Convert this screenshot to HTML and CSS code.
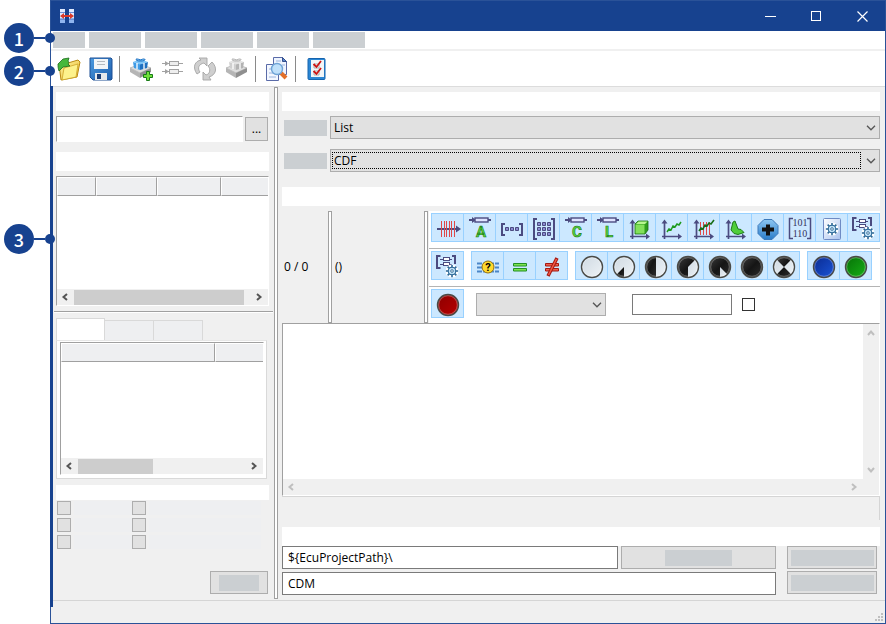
FILE: index.html
```html
<!DOCTYPE html>
<html lang="en">
<head>
<meta charset="utf-8">
<title>Data conversion</title>
<link rel="stylesheet" href="styles.css">
</head>
<body>
<svg class="defs" aria-hidden="true">
  <defs>
    <linearGradient id="gLight" x1="0" y1="0" x2="1" y2="1"><stop offset="0" stop-color="#cfd9e2"/><stop offset="1" stop-color="#eef3f7"/></linearGradient>
    <linearGradient id="gDark" x1="0" y1="0" x2="1" y2="1"><stop offset="0" stop-color="#3c3c3c"/><stop offset=".5" stop-color="#151515"/><stop offset="1" stop-color="#2c2c2c"/></linearGradient>
    <linearGradient id="gBlue" x1="0" y1="0" x2="1" y2="1"><stop offset="0" stop-color="#0a2a90"/><stop offset="1" stop-color="#1a55d8"/></linearGradient>
    <linearGradient id="gGreen" x1="0" y1="0" x2="1" y2="1"><stop offset="0" stop-color="#067006"/><stop offset="1" stop-color="#17b017"/></linearGradient>
    <linearGradient id="gRed" x1="0" y1="0" x2="1" y2="1"><stop offset="0" stop-color="#8c0000"/><stop offset="1" stop-color="#b80000"/></linearGradient>
    <linearGradient id="gPage" x1="0" y1="0" x2="1" y2="1"><stop offset="0" stop-color="#ffffff"/><stop offset="1" stop-color="#a9c2ee"/></linearGradient>
    <linearGradient id="gFolder" x1="0" y1="0" x2="1" y2="1"><stop offset="0" stop-color="#fff7a8"/><stop offset="1" stop-color="#eab92c"/></linearGradient>
    <linearGradient id="gOct" x1="0" y1="0" x2="0" y2="1"><stop offset="0" stop-color="#8cc6f2"/><stop offset="1" stop-color="#2b7cc8"/></linearGradient>
    <linearGradient id="gSave" x1="0" y1="0" x2="1" y2="1"><stop offset="0" stop-color="#4d9be0"/><stop offset="1" stop-color="#1d5fae"/></linearGradient>
    <symbol id="param" viewBox="0 0 31 27">
      <path d="M5 6h5M24 6h3" stroke="#4b4b80" stroke-width="2"/><path d="M8 3l4 3-4 3z" fill="#4b4b80"/>
      <rect x="11" y="4" width="13" height="4" fill="#dfe3ff" stroke="#4b4b80" stroke-width="1.4"/>
    </symbol>
    <symbol id="axes" viewBox="0 0 31 27">
      <path d="M8.500 8v17M6 22.500h17" stroke="#4b4b80" stroke-width="1.700" fill="none"/>
      <path d="M5.500 9.500l3-4 3 4zM22 19.500l4 3-4 3z" fill="#4b4b80"/>
    </symbol>
    <symbol id="gear" viewBox="0 0 16 16">
      <circle cx="8" cy="8" r="7.500" fill="#fff"/>
      <path d="M8 1v14M1 8h14M3 3l10 10M13 3L3 13" stroke="#2b6796" stroke-width="1.800"/>
      <circle cx="8" cy="8" r="4.300" fill="#bfe0f5" stroke="#2b6796" stroke-width="1.200"/>
      <circle cx="8" cy="8" r="1.500" fill="#fff" stroke="#2b6796"/>
    </symbol>
    <symbol id="listgear" viewBox="0 0 31 27">
      <path d="M8.500 4H5v12h3.500M20 4h3v8" fill="none" stroke="#4b4b80" stroke-width="2"/>
      <path d="M8 7.500h12M8 12.500h12" stroke="#4b4b80" stroke-width="1"/>
      <rect x="11.500" y="5.500" width="6" height="3" fill="#fff" stroke="#4b4b80"/><rect x="11.500" y="10.500" width="6" height="3" fill="#fff" stroke="#4b4b80"/>
      <use href="#gear" x="13" y="12" width="14" height="14"/>
    </symbol>
    <symbol id="ring" viewBox="0 0 31 27">
      <circle cx="16" cy="15" r="10.500" fill="none" stroke="#4a4a46" stroke-width="1.400"/>
      <circle cx="16" cy="15" r="9.300" fill="none" stroke="#fff" stroke-opacity=".3"/>
    </symbol>
    <symbol id="chev" viewBox="0 0 10 6"><path d="M1 .8l4 4 4-4" fill="none" stroke="#555" stroke-width="1.300"/></symbol>
    <symbol id="arrow" viewBox="0 0 8 8"><path d="M6 1L2.500 4 6 7" fill="none" stroke="currentColor" stroke-width="2"/></symbol>
    <symbol id="crate" viewBox="0 0 24 24">
      <path d="M1 13l10-4 11 4-11 5z" fill="#dedede" stroke="#aaa" stroke-width=".7"/>
      <path d="M1 13v4l10 6v-5z" fill="#b5b5b5"/><path d="M22 13v4l-11 6v-5z" fill="#8f8f8f"/>
      <path d="M4 7l7 2v6l-6-2z" fill="var(--box-a)"/><path d="M19 7l-8 2v6l7-2z" fill="var(--box-b)"/>
      <path d="M4 7l7-3 8 3-8 2.500z" fill="var(--box-c)"/>
      <path d="M8 8v6M15 8v6" stroke="#fff" stroke-width="1.300"/>
      <path d="M11.500 6C6 6.500 5 2 11.500 5c6-3 6 1.500 0 1z" fill="var(--box-c)" stroke="var(--box-b)" stroke-width="1"/>
    </symbol>
  </defs>
</svg>

<div class="app">
  <header class="titlebar">
    <svg class="logo" width="18" height="16" viewBox="0 0 18 16"><rect x="2" y="1" width="5" height="14" fill="#dfe9ff"/><rect x="11" y="1" width="5" height="14" fill="#dfe9ff"/><path d="M2 10h5v5H2zM11 10h5v5h-5z" fill="#8fb4ee"/><path d="M2 4.500h5M11 4.500h5M2 11.500h5M11 11.500h5" stroke="#6a8fd8"/><path d="M4 8h10" stroke="#d8392b" stroke-width="2"/><path d="M2 8l4-3v6zM16 8l-4-3v6z" fill="#d8392b"/></svg>
    <div class="winbtns">
      <button aria-label="Minimize"><svg width="11" height="11" viewBox="0 0 11 11"><path d="M0 5.500h11" stroke="#fff"/></svg></button>
      <button aria-label="Maximize"><svg width="11" height="11" viewBox="0 0 11 11"><rect x=".5" y=".5" width="9" height="9" fill="none" stroke="#fff"/></svg></button>
      <button aria-label="Close"><svg width="11" height="11" viewBox="0 0 11 11"><path d="M.5 .5l10 10M10.500 .5l-10 10" stroke="#fff" stroke-width="1.200"/></svg></button>
    </div>
  </header>
  <nav class="menu"><span class="short"></span><span></span><span></span><span></span><span></span><span></span></nav>
  <div class="toolbar">
    <button aria-label="Open"><svg width="24" height="24" viewBox="0 0 24 24"><path d="M2 7l7-3 2 2 10-3 2 2-3 15-16 3z" fill="url(#gFolder)" stroke="#b98a12"/><path d="M7 11l14-4-2 13-14 3z" fill="#fdf28c" stroke="#cda328" stroke-width=".8"/><path d="M1 7l5-5 6-1-1 3c1 1 1 2 0 3l2 2-7 1-4 4c-1-3-1-5-1-7z" fill="#46b83c" stroke="#1b6b1b" stroke-width=".8"/></svg></button>
    <button aria-label="Save"><svg width="24" height="24" viewBox="0 0 24 24"><path d="M1 1h21l1 1v20l-1 1H4l-3-3z" fill="url(#gSave)" stroke="#1c4f94"/><path d="M5 2h14v10H5z" fill="#f3f5f7"/><path d="M8 4.500h8M8 7.500h8" stroke="#b5babf"/><path d="M6 16h12v7H6z" fill="#e6e9ec"/><path d="M8 17h4v5H8z" fill="#1b3f78"/></svg></button>
    <i class="sep"></i>
    <button aria-label="Add package" class="blue"><svg width="24" height="24" viewBox="0 0 24 24"><use href="#crate" y="-2" width="24" height="24"/><path d="M17.500 14.500h3v3h3v3h-3v3h-3v-3h-3v-3h3z" fill="#6fe03a" stroke="#187a18"/></svg></button>
    <button aria-label="Parameters"><svg width="24" height="24" viewBox="0 0 24 24"><path d="M1 6.500h21M1 14.500h21" stroke="#a2a2a2"/><path d="M4 4l4 2.500L4 9zM4 12l4 2.500L4 17z" fill="#a2a2a2"/><rect x="8.500" y="4.500" width="9" height="4" fill="#eee" stroke="#a2a2a2"/><rect x="8.500" y="12.500" width="9" height="4" fill="#eee" stroke="#a2a2a2"/></svg></button>
    <button aria-label="Refresh"><svg width="24" height="24" viewBox="0 0 24 24"><path d="M4 17C-1 10 2 4 8 3L6 1l8 0v8l-3-3C6 7 4 11 7 15zM19 5c6 6 4 13-3 15l2 3h-8v-8l3 3c4-1 5-6 2-9z" fill="#cfcfcf" stroke="#a5a5a5" stroke-width=".9"/></svg></button>
    <button aria-label="Package"><svg width="24" height="24" viewBox="0 0 24 24"><use href="#crate" y="-2" width="24" height="24"/></svg></button>
    <i class="sep"></i>
    <button aria-label="Find in documents"><svg width="24" height="26" viewBox="0 0 24 26"><path d="M8.500 1.500h9l4 4v13h-13z" fill="#eef4ff" stroke="#5a6ba8"/><path d="M17.500 1.500v4h4z" fill="#5b86cc" stroke="#34508e"/><path d="M1.500 8.500h12v16h-12z" fill="#f3f7ff" stroke="#5a6ba8"/><path d="M4 13h6M4 17h6M4 21h7M11 5h5M17 9h3" stroke="#9ab4dd"/><path d="M16 17l5 5" stroke="#e2702a" stroke-width="4"/><circle cx="12" cy="13" r="5.500" fill="#bfe0fa" stroke="#6fa4d6" stroke-width="1.400"/></svg></button>
    <i class="sep"></i>
    <button aria-label="Checks"><svg width="20" height="24" viewBox="0 0 20 24"><rect x="1" y="1.500" width="17" height="21" rx="1" fill="#2a86d4" stroke="#1664ae"/><path d="M4 3h13v17H4z" fill="#f2f5f7"/><path d="M7 7h5v4H7zM7 14h5v4H7z" fill="#fff" stroke="#999" stroke-width=".8"/><path d="M6.500 7l3 3 4.500-6M6.500 14l3 3 4.500-6" fill="none" stroke="#cc1414" stroke-width="1.800"/></svg></button>
  </div>

  <main class="main">
    <aside class="side">
      <div class="band"></div>
      <div class="path"><input type="text" aria-label="Path"><button class="btn">...</button></div>
      <div class="band second"></div>
      <div class="frame">
        <table><tr><th class="w40"></th><th class="w61"></th><th class="w64"></th><th></th></tr></table>
        <div class="space"></div>
        <div class="hscroll"><svg width="8" height="10"><use href="#arrow"/></svg><i class="thumb long"></i><svg class="flip" width="8" height="10"><use href="#arrow"/></svg></div>
      </div>
      <hr>
      <div class="tabs"><button class="on" aria-label="Tab 1"></button><button aria-label="Tab 2"></button><button aria-label="Tab 3"></button></div>
      <div class="tabpanel">
        <div class="frame">
          <table><tr><th class="w155"></th><th></th></tr></table>
          <div class="space"></div>
          <div class="hscroll"><svg width="8" height="10"><use href="#arrow"/></svg><i class="thumb"></i><svg class="flip" width="8" height="10"><use href="#arrow"/></svg></div>
        </div>
      </div>
      <div class="band low"></div>
      <div class="checks">
        <label><input type="checkbox" aria-label="Option 1"><span></span></label><label><input type="checkbox" aria-label="Option 2"><span></span></label>
        <label><input type="checkbox" aria-label="Option 3"><span></span></label><label><input type="checkbox" aria-label="Option 4"><span></span></label>
        <label><input type="checkbox" aria-label="Option 5"><span></span></label><label><input type="checkbox" aria-label="Option 6"><span></span></label>
      </div>
      <button class="btn apply" aria-label="Apply"><i></i></button>
    </aside>
    <div class="split"></div>
    <section class="content">
      <div class="band"></div>
      <div class="field"><span class="tag"></span><div class="combo"><select aria-label="View"><option>List</option></select><svg width="10" height="6"><use href="#chev"/></svg></div></div>
      <div class="field"><span class="tag"></span><div class="combo focus"><select aria-label="Format"><option>CDF</option></select><i></i><svg width="10" height="6"><use href="#chev"/></svg></div></div>
      <div class="band third"></div>
      <div class="tools">
        <div class="count">0 / 0</div><div class="split"></div>
        <div class="sel">()</div><div class="split"></div>
        <div class="rows">
          <div class="row"><div class="group">
            <button aria-label="Signals"><svg viewBox="0 0 31 27"><path d="M5 15h20" stroke="#4b4b80" stroke-width="2"/><path d="M24 11.500l5 3.500-5 3.500z" fill="#4b4b80"/><path d="M9.500 7v16M12.500 7v16M14.500 7v16M17.500 7v16M19.500 7v16M22.500 7v16" stroke="#e04848" stroke-width="1"/></svg></button>
            <button aria-label="Axis"><svg viewBox="0 0 31 27"><use href="#param"/><text class="glyph" x="17" y="23">A</text></svg></button>
            <button aria-label="Array"><svg viewBox="0 0 31 27"><path d="M9 10H6v11h3M23 10h3v11h-3" fill="none" stroke="#4b4b80" stroke-width="2"/><path d="M9.500 13.500h3v3h-3zM14.500 13.500h3v3h-3zM19.500 13.500h3v3h-3z" fill="#8a8ad0" stroke="#4b4b80"/></svg></button>
            <button aria-label="Matrix"><svg viewBox="0 0 31 27"><path d="M9 5H6v20h3M23 5h3v20h-3" fill="none" stroke="#4b4b80" stroke-width="2"/><path d="M9.500 8.500h3v3h-3zM14.500 8.500h3v3h-3zM19.500 8.500h3v3h-3zM9.500 13.500h3v3h-3zM14.500 13.500h3v3h-3zM19.500 13.500h3v3h-3zM9.500 18.500h3v3h-3zM14.500 18.500h3v3h-3zM19.500 18.500h3v3h-3z" fill="#8a8ad0" stroke="#4b4b80"/></svg></button>
            <button aria-label="Curve"><svg viewBox="0 0 31 27"><use href="#param"/><text class="glyph" x="17" y="23">C</text></svg></button>
            <button aria-label="Literal"><svg viewBox="0 0 31 27"><use href="#param"/><text class="glyph" x="17" y="23">L</text></svg></button>
            <button aria-label="Cuboid"><svg viewBox="0 0 31 27"><use href="#axes"/><path d="M11 10l3-3h10v9l-3 4H11z" fill="#2f9e1c" stroke="#1d6e12" stroke-width=".8"/><path d="M11.500 10.500h9v9h-9z" fill="#83e05a"/><path d="M12 10l2.500-2.500h9L21 10z" fill="#b8f590"/></svg></button>
            <button aria-label="Curve chart"><svg viewBox="0 0 31 27"><use href="#axes"/><path d="M11 18l2-3 2 1 2-4 2 1 2-3 2 1 2-3" fill="none" stroke="#1d9a1d" stroke-width="1.500"/></svg></button>
            <button aria-label="Sampled curve"><svg viewBox="0 0 31 27"><path d="M12.500 8v13M15.500 8v13M18.500 8v13M21.500 8v13" stroke="#e04848" stroke-width="1"/><use href="#axes"/><path d="M11 17l2-3 2 1 2-4 2 1 2-3 2 1 3-4" fill="none" stroke="#176d17" stroke-width="1.600"/></svg></button>
            <button aria-label="Map"><svg viewBox="0 0 31 27"><use href="#axes"/><path d="M11 16l2-8 2-1 3 8 3 .5 3 3-6 2-4-1z" fill="#4fce3a" stroke="#1d7a18"/></svg></button>
            <button aria-label="Add"><svg viewBox="0 0 31 27"><path d="M12 5.500h8l6 6v8l-6 6h-8l-6-6v-8z" fill="url(#gOct)" stroke="#3c79ba"/><path d="M14 10.500h4v3h4v4h-4v4h-4v-4h-4v-4h4z" fill="#111"/></svg></button>
            <button aria-label="Binary"><svg viewBox="0 0 31 27"><path d="M9 4.500H5.500v20H9M23 4.500h3.500v20H23" fill="none" stroke="#4b4b80" stroke-width="1.500"/><text class="bits" x="16" y="12">101</text><text class="bits" x="16" y="23">110</text></svg></button>
            <button aria-label="Page settings"><svg viewBox="0 0 31 27"><rect x="7.500" y="4.500" width="17" height="21" rx="1" fill="url(#gPage)" stroke="#6f8bc4"/><use href="#gear" x="9" y="8" width="14" height="14"/></svg></button>
            <button aria-label="List settings"><svg viewBox="0 0 31 27"><use href="#listgear"/></svg></button>
          </div></div>
          <div class="row">
            <div class="group"><button aria-label="Filter settings"><svg viewBox="0 0 31 27"><use href="#listgear"/></svg></button></div>
            <div class="group">
              <button aria-label="Unknown"><svg viewBox="0 0 31 27"><path d="M5 11.500h22M5 15.500h22M5 19.500h22" stroke="#4b86c8" stroke-width="2" stroke-dasharray="5 1"/><circle cx="16" cy="15" r="6" fill="#ffd92e" stroke="#98720a"/><text class="quest" x="16" y="19">?</text></svg></button>
              <button aria-label="Equal"><svg viewBox="0 0 31 27"><path d="M9.500 11.500h13v2.500h-13zM9.500 16.500h13v2.500h-13z" fill="#7fe34f" stroke="#239023"/></svg></button>
              <button aria-label="Not equal"><svg viewBox="0 0 31 27"><path d="M9.500 11.500h13v2.500h-13zM9.500 16.500h13v2.500h-13z" fill="#f06050" stroke="#a51a12"/><path d="M12 24l9-18" stroke="#a51a12" stroke-width="3.500"/><path d="M12.500 23l8-16" stroke="#f25a48" stroke-width="1.600"/></svg></button>
            </div>
            <div class="group">
              <button aria-label="Score 0"><svg viewBox="0 0 31 27"><circle cx="16" cy="15" r="10.500" fill="url(#gLight)"/><use href="#ring"/></svg></button>
              <button aria-label="Score 12"><svg viewBox="0 0 31 27"><circle cx="16" cy="15" r="10.500" fill="url(#gLight)"/><path d="M16 15v10.500a10.500 10.500 0 0 1-7.400-3.100z" fill="url(#gDark)"/><use href="#ring"/></svg></button>
              <button aria-label="Score 50"><svg viewBox="0 0 31 27"><circle cx="16" cy="15" r="10.500" fill="url(#gLight)"/><path d="M16 4.500v21a10.500 10.500 0 0 1 0-21z" fill="url(#gDark)"/><use href="#ring"/></svg></button>
              <button aria-label="Score 62"><svg viewBox="0 0 31 27"><circle cx="16" cy="15" r="10.500" fill="url(#gDark)"/><path d="M16 15l7.400-7.400A10.500 10.500 0 0 1 16 25.500z" fill="url(#gLight)"/><use href="#ring"/></svg></button>
              <button aria-label="Score 87"><svg viewBox="0 0 31 27"><circle cx="16" cy="15" r="10.500" fill="url(#gDark)"/><path d="M16 15l7.400 7.400A10.500 10.500 0 0 1 16 25.500z" fill="url(#gLight)"/><use href="#ring"/></svg></button>
              <button aria-label="Score 100"><svg viewBox="0 0 31 27"><circle cx="16" cy="15" r="10.500" fill="url(#gDark)"/><use href="#ring"/></svg></button>
              <button aria-label="Score reset"><svg viewBox="0 0 31 27"><circle cx="16" cy="15" r="10.500" fill="url(#gLight)"/><path d="M16 15L8.600 7.600a10.500 10.500 0 0 1 14.800 0zM16 15l7.400 7.400a10.500 10.500 0 0 1-14.800 0z" fill="url(#gDark)"/><use href="#ring"/></svg></button>
            </div>
            <div class="group">
              <button aria-label="Blue mark"><svg viewBox="0 0 31 27"><circle cx="16" cy="15" r="10.500" fill="url(#gBlue)"/><use href="#ring"/></svg></button>
              <button aria-label="Green mark"><svg viewBox="0 0 31 27"><circle cx="16" cy="15" r="10.500" fill="url(#gGreen)"/><use href="#ring"/></svg></button>
            </div>
          </div>
          <div class="row last">
            <div class="group"><button aria-label="Red mark"><svg viewBox="0 0 31 27"><circle cx="16" cy="15" r="10.500" fill="url(#gRed)"/><use href="#ring"/></svg></button></div>
            <div class="combo small"><select aria-label="Filter"><option></option></select><svg width="10" height="6"><use href="#chev"/></svg></div>
            <input type="text" class="box" aria-label="Value"><input type="checkbox" class="tick" aria-label="Exact">
          </div>
        </div>
      </div>
      <div class="editor">
        <textarea aria-label="Results"></textarea>
        <div class="vscroll"><svg class="up" width="8" height="8"><use href="#arrow"/></svg><svg class="down" width="8" height="8"><use href="#arrow"/></svg></div>
        <div class="hscroll pale"><svg width="8" height="10"><use href="#arrow"/></svg><svg class="flip" width="8" height="10"><use href="#arrow"/></svg></div>
      </div>
      <div class="status"></div>
      <div class="band"></div>
      <div class="output">
        <div class="fields">
          <div class="line"><input type="text" class="box" value="${EcuProjectPath}\" aria-label="Folder"><button class="btn mid" aria-label="Browse"><i></i></button></div>
          <input type="text" class="box" value="CDM" aria-label="Suffix">
        </div>
        <div class="actions"><button class="btn" aria-label="Start"><i></i></button><button class="btn" aria-label="Reset"><i></i></button></div>
      </div>
    </section>
  </main>
  <footer class="foot"><svg width="8" height="8" viewBox="0 0 8 8"><path d="M6 0h2v2H6zM3 3h2v2H3zM6 3h2v2H6zM0 6h2v2H0zM3 6h2v2H3zM6 6h2v2H6z" fill="#bfbfbf"/></svg></footer>
</div>

<div class="callout one"><b>1</b><i></i></div>
<div class="callout two"><b>2</b><i></i></div>
<div class="callout three"><b>3</b><i></i></div>
</body>
</html>
```
FILE: styles.css
```css
* { box-sizing: border-box; }
body { margin: 0; background: #fff; font: 12px/16px "Open Sans", "Noto Sans", sans-serif; color: #000; }
button, input, select, textarea { font: inherit; color: inherit; margin: 0; padding: 0; border-radius: 0; }
button { border: 0; background: none; }
svg { display: block; }
.defs { position: absolute; width: 0; height: 0; }

.app { position: relative; display: flex; flex-direction: column; min-height: 100vh; margin-left: 50px; border: 1px solid #2a5298; border-top: 0; background: #f0f0f0; }
.app::before { content: ""; position: absolute; left: -1px; top: 86px; bottom: 16px; width: 3px; background: #17428f; }

.titlebar { display: flex; justify-content: space-between; align-items: center; height: 31px; padding-left: 7px; background: #17428f; border-top: 1px solid #2a5298; }
.winbtns { display: flex; }
.winbtns button { display: grid; place-items: center; width: 46px; height: 30px; }

.menu { display: flex; gap: 4px; height: 20px; padding: 1px 2px; background: #fff; border-bottom: 2px solid #f0f0f0; }
.menu span { width: 52px; height: 16px; background: #cbcfd2; }
.menu .short { width: 32px; }

.toolbar { display: flex; align-items: center; height: 36px; padding-left: 2px; background: #fff; border-bottom: 1px solid #dcdcdc; --box-a: #cfcfcf; --box-b: #b3b3b3; --box-c: #e2e2e2; }
.toolbar button { display: grid; place-items: center; width: 32px; height: 32px; }
.toolbar .blue { --box-a: #3f9be6; --box-b: #1f6fc0; --box-c: #7cc4f7; }
.sep { width: 1px; height: 26px; margin: 0 5px 0 2px; background: #8a8a8a; }

.main { flex: 1; display: flex; }
.band { flex: none; height: 19px; background: #fff; }
.split { flex: none; width: 4px; border: 1px solid #a0a0a0; background: #fff; }
.main > .split { margin: 0 0 1px 1px; }

.side { display: flex; flex-direction: column; width: 222px; padding: 5px 4px 6px 5px; }
.path { display: flex; align-items: center; gap: 2px; height: 26px; margin: 5px 1px 10px 0; }
.path input { flex: 1; min-width: 0; height: 26px; border: solid #fff; border-width: 1px; border-top-color: #a0a0a0; border-left-color: #a0a0a0; outline: 0; }
.btn { display: grid; place-items: center; height: 23px; background: #e1e1e1; border: 1px solid #adadad; }
.btn i { width: 83px; height: 16px; background: #cbcfd2; }
.path .btn { width: 23px; height: 24px; }

.frame { flex: 1; display: flex; flex-direction: column; border: 1px solid #fff; border-top-color: #a0a0a0; border-left-color: #a0a0a0; background: #fff; }
.side > .frame { flex: 1 1 130px; margin-top: 5px; }
.frame table { width: 100%; height: 19px; table-layout: fixed; border-collapse: separate; border-spacing: 0; background: #eeeff1; }
.frame th { padding: 0; border: 1px solid #fff; border-right-color: #a0a0a0; border-bottom-color: #a0a0a0; }
.frame th:last-child { border-right: 0; }
.w40 { width: 39px; }
.w61 { width: 61px; }
.w64 { width: 64px; }
.w155 { width: 154px; }
.space { flex: 1; }
.hscroll { display: flex; align-items: center; gap: 5px; height: 16px; padding: 0 5px 0 4px; background: #f0f0f0; color: #555; }
.hscroll .flip { margin-left: auto; }
.flip { transform: rotate(180deg); }
.thumb { width: 75px; height: 15px; background: #cdcdcd; }
.thumb.long { width: 170px; }
.side hr { width: auto; height: 2px; margin: 5px -4px 5px -2px; border: 0; border-top: 1px solid #a0a0a0; background: #fff; }

.tabs { display: flex; align-items: flex-end; height: 22px; }
.tabs button { width: 49px; height: 20px; border: 1px solid #d9d9d9; border-bottom: 0; border-left: 0; background: #eeeff1; }
.tabs .on { height: 22px; border-left: 1px solid #d9d9d9; background: #fff; }
.tabpanel { flex: 1 1 139px; display: flex; margin-right: 2px; padding: 1px 2px 3px 3px; border: 1px solid #d9d9d9; border-top-color: #e6e6e6; background: #fff; }
.low { height: 15px; margin-top: 6px; }
.checks { display: grid; grid-template-columns: 75px 1fr; gap: 3px 0; margin: 1px 8px 22px 1px; }
.checks label { display: flex; gap: 3px; height: 14px; }
.checks input { appearance: none; width: 14px; height: 14px; background: #e1e1e1; border: 1px solid #adadad; }
.checks span { flex: 1; background: #eeeff1; }
.apply { width: 58px; margin: 0 1px 0 auto; }
.apply i { width: 40px; }

.content { flex: 1; min-width: 0; display: flex; flex-direction: column; padding: 5px 5px 5px 4px; }
.field { display: flex; align-items: center; gap: 3px; margin: 5px 0; padding-left: 2px; }
.tag { width: 43px; height: 16px; background: #cbcfd2; }
.combo { flex: 1; display: grid; align-items: center; }
.combo > * { grid-area: 1 / 1; }
.combo select { appearance: none; width: 100%; height: 23px; padding-left: 3px; background: #e1e1e1; border: 1px solid #adadad; }
.combo svg { justify-self: end; margin-right: 4px; pointer-events: none; }
.focus i { align-self: stretch; margin: 3px 19px 3px 2px; border: 1px dotted #000; pointer-events: none; }
.third { margin-top: 10px; }

.tools { display: flex; margin-top: 5px; }
.count, .sel { flex: none; display: flex; align-items: center; }
.count { width: 46px; padding-left: 2px; }
.sel { width: 92px; padding-left: 3px; }
.rows { flex: 1; min-width: 0; margin-left: 1px; background: #fff; }
.row { display: flex; gap: 7px; height: 38px; padding: 2px 0 0 2px; border-bottom: 1px solid #b4b4b4; }
.row.last { height: 36px; border-bottom: 0; }
.group { display: flex; height: 29px; border-right: 1px solid #99d1ff; }
.group button { width: 32px; height: 29px; background: #cce8ff; border: 1px solid #99d1ff; border-right: 0; }
.group svg { width: 31px; height: 27px; }
.glyph { font: bold 15px Roboto, sans-serif; text-anchor: middle; fill: #57d43c; stroke: #1d7a18; stroke-width: .6px; }
.bits { font: 10px "Liberation Serif", serif; text-anchor: middle; fill: #33335c; }
.quest { font: bold 11px Roboto, sans-serif; text-anchor: middle; }
.box { height: 23px; padding: 0 5px; background: #fff; border: 1px solid #7a7a7a; outline: 0; }
.small { flex: none; width: 130px; height: 23px; margin: 4px 19px 0 5px; }
.row .box { width: 100px; height: 21px; margin-top: 5px; }
.tick { appearance: none; width: 13px; height: 13px; margin: 9px 0 0 3px; background: #fff; border: 1px solid #333; }

.editor { flex: 1; display: grid; grid-template: 1fr 16px / 1fr 16px; border: 1px solid #fff; border-top-color: #a0a0a0; border-left-color: #a0a0a0; background: #f0f0f0; }
.editor textarea { width: 100%; height: 100%; border: 0; outline: 0; resize: none; background: #fff; }
.vscroll { display: flex; flex-direction: column; justify-content: space-between; align-items: center; padding: 5px 0; color: #bfbfbf; }
.up { transform: rotate(90deg); }
.down { transform: rotate(-90deg); }
.pale { color: #bfbfbf; }
.status { height: 24px; margin-bottom: 7px; border: 1px solid #d5d5d5; border-width: 1px 1px 0 0; }
.output { display: flex; gap: 11px; padding-right: 3px; }
.fields { flex: 1; display: flex; flex-direction: column; gap: 3px; }
.line { display: flex; gap: 3px; }
.line .box { flex: 1; min-width: 0; }
.mid { width: 155px; }
.mid i { width: 67px; }
.actions { display: flex; flex-direction: column; gap: 2px; width: 90px; }

.foot { display: flex; justify-content: flex-end; align-items: flex-end; height: 23px; padding: 0 2px 2px 0; border-top: 1px solid #d5d5d5; }

.callout { position: absolute; left: 4px; display: flex; align-items: center; }
.callout b { display: grid; place-items: center; width: 30px; height: 30px; border-radius: 50%; background: #17428f; color: #fff; font: 500 18px/30px "Noto Sans CJK JP", Roboto, sans-serif; }
.callout::after { content: ""; order: 1; width: 11px; height: 2px; background: #17428f; }
.callout i { order: 2; width: 10px; height: 10px; border-radius: 50%; background: #17428f; }
.one { top: 23px; }
.two { top: 56px; }
.three { top: 224px; }
```
